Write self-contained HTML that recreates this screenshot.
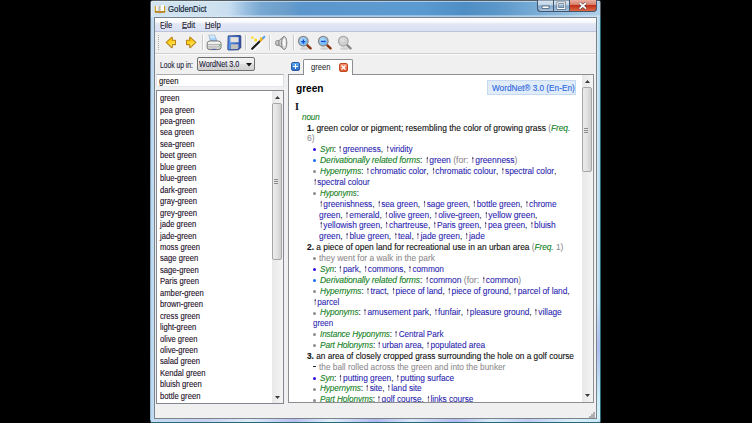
<!DOCTYPE html>
<html><head><meta charset="utf-8"><style>
*{margin:0;padding:0;box-sizing:border-box}
html,body{width:752px;height:423px;background:#000;overflow:hidden;font-family:"Liberation Sans",sans-serif;color:#000}
.a{position:absolute}
svg{display:block}
.t{position:absolute;white-space:nowrap;transform-origin:0 0}
.g{color:#0f8020;font-style:italic;-webkit-text-stroke:0.1px #0f8020;letter-spacing:-0.13px}
.k{color:#2a1eb0;-webkit-text-stroke:0.08px #2a1eb0;letter-spacing:-0.06px}
.ar{color:#5a5a7a}
.gr{color:#8e8a8e;-webkit-text-stroke:0.08px #8e8a8e}
.bl{color:#111;-webkit-text-stroke:0.12px #111}
u{text-decoration-thickness:0.7px;text-underline-offset:1px}
.dot{position:absolute;width:3px;height:3px;border-radius:1.5px}
</style></head><body>
<div class="a" style="left:150px;top:0px;width:451px;height:423px;border-radius:3px 3px 2px 2px;background:#555d64"></div>
<div class="a" style="left:150px;top:17px;width:451px;height:406px;border-radius:0 0 3px 3px;background:#2e6878"></div>
<div class="a" style="left:150px;top:17px;width:1px;height:403px;background:linear-gradient(180deg,#5a646c,#7a98b0 30%,#9ab8d0 100%)"></div>
<div class="a" style="left:151px;top:1px;width:449px;height:421px;border-radius:2px 2px 2px 2px;background:linear-gradient(90deg,#d2e3ef 0px,#cfe2ee 60px,#c8def0 78px,#98bee0 95px,#78a8d2 110px,#6c9ecc 135px,#5b96cc 150px,#5c9ad0 230px,#5a9ad0 270px,#4f8ec4 315px,#5a96c8 345px,#78acd6 385px,#98c0e0 420px,#b0d0ea 449px)"></div>
<div class="a" style="left:151px;top:1px;width:449px;height:1px;background:rgba(235,245,252,0.55)"></div>
<div class="a" style="left:151px;top:15px;width:449px;height:2px;background:linear-gradient(180deg,rgba(200,225,245,0.4),rgba(220,235,250,0.7))"></div>
<div class="a" style="left:151px;top:17px;width:449px;height:405px;border-radius:0 0 2px 2px;background:linear-gradient(180deg,#bcd6ec 0,#b4d0ea 60%,#b8d8f0 100%)"></div>
<div class="a" style="left:151px;top:2px;width:1px;height:420px;background:rgba(230,242,252,0.6)"></div>
<div class="a" style="left:597px;top:17px;width:3px;height:405px;background:linear-gradient(90deg,#d2eef8,#b0d4ee)"></div>
<div class="a" style="left:151px;top:17px;width:3px;height:405px;background:linear-gradient(90deg,#b8d6ee,#c4def2)"></div>
<div class="a" style="left:597px;top:300px;width:3px;height:120px;background:linear-gradient(180deg,rgba(170,180,240,0) 0,rgba(170,180,240,0.8) 40%,#c8ecf8 80%,#d8f4fc 100%)"></div>
<div class="a" style="left:151px;top:419px;width:449px;height:3px;border-radius:0 0 2px 2px;background:linear-gradient(90deg,#c4dcf2 0,#c8d0f0 12%,#dcecf8 22%,#b8c0f0 32%,#e0f0fa 40%,#b0b8f0 50%,#d8e8f8 58%,#b4bcf0 68%,#d8ecf8 76%,#c0ccf2 84%,#d8f0fa 94%,#c8e8f6 100%)"></div>
<svg class="a" style="left:154px;top:3px" width="12" height="11" viewBox="0 0 12 11"><path d="M0.8 3.6 Q0.8 3 1.5 3 L10.5 3 Q11.2 3 11.2 3.6 L11.2 8.8 Q11.2 9.6 10.4 9.6 L6.6 9.6 L6 10.4 L5.4 9.6 L1.6 9.6 Q0.8 9.6 0.8 8.8 Z" fill="#d69c14"/><path d="M0.8 8.2 L11.2 8.2 L11.2 8.8 Q11.2 9.6 10.4 9.6 L6.6 9.6 L6 10.4 L5.4 9.6 L1.6 9.6 Q0.8 9.6 0.8 8.8 Z" fill="#a87408"/><path d="M1.9 3 Q3.9 2.4 5.8 3.2 L5.8 8.3 Q3.9 7.7 1.9 8.1 Z" fill="#f2f2ee"/><path d="M6.2 3.2 Q8 2.2 9.9 1.6 L10.1 8.1 Q8.1 7.7 6.2 8.3 Z" fill="#ffffff"/><path d="M4.2 3 L5.8 3.2 L5.8 8.3 L4.2 7.8 Z" fill="#c8c8c4"/><path d="M6 3.2 L6 8.4" stroke="#8a8a84" stroke-width="0.5"/></svg>
<div class="t" style="left:168.20px;top:5.05px;font-size:8.80px;line-height:8.80px;transform:scaleX(0.885);color:#0c1a33;-webkit-text-stroke:0.15px #0c1a33">GoldenDict</div>
<svg class="a" style="left:537px;top:0px" width="60" height="12" viewBox="0 0 60 12"><defs><linearGradient id="gb" x1="0" y1="0" x2="0" y2="1"><stop offset="0" stop-color="#dce8f2"/><stop offset="0.45" stop-color="#bcd2e6"/><stop offset="0.5" stop-color="#7fa6cc"/><stop offset="1" stop-color="#a8c6e2"/></linearGradient><linearGradient id="gc" x1="0" y1="0" x2="0" y2="1"><stop offset="0" stop-color="#eab0a4"/><stop offset="0.45" stop-color="#d87a66"/><stop offset="0.5" stop-color="#c2301a"/><stop offset="1" stop-color="#dc6a48"/></linearGradient></defs><path d="M0.5 0 L0.5 8.5 Q0.5 11.5 3.5 11.5 L56.5 11.5 Q59.5 11.5 59.5 8.5 L59.5 0Z" fill="url(#gb)" stroke="#46566a" stroke-width="1"/><path d="M32.5 0 L32.5 11 L56.5 11 Q59 11 59 8.5 L59 0Z" fill="url(#gc)"/><path d="M16.5 0 L16.5 11.5 M32.5 0 L32.5 11.5" stroke="#46566a" stroke-width="1"/><path d="M0.5 0 L0.5 8.5 Q0.5 11.5 3.5 11.5 L56.5 11.5 Q59.5 11.5 59.5 8.5 L59.5 0" fill="none" stroke="#46566a" stroke-width="1"/><rect x="5" y="6" width="7" height="2.6" fill="#fff" stroke="#3a4a5e" stroke-width="0.7"/><rect x="20.8" y="2.8" width="7" height="5.6" fill="none" stroke="#3a4a5e" stroke-width="2.2"/><rect x="20.8" y="2.8" width="7" height="5.6" fill="none" stroke="#fff" stroke-width="1.2"/><path d="M42.6 3 L49 8.6 M49 3 L42.6 8.6" stroke="#4a3a3a" stroke-width="2.8"/><path d="M42.6 3 L49 8.6 M49 3 L42.6 8.6" stroke="#fff" stroke-width="1.7"/></svg>
<div class="a" style="left:154px;top:17px;width:443px;height:402px;background:#f0f0f0;border:1px solid #7a828c"></div>
<div class="a" style="left:155px;top:18px;width:441px;height:14px;background:linear-gradient(180deg,#ffffff 0,#f8f9fc 30%,#e2e7f5 42%,#d8dff2 100%)"></div>
<div class="a" style="left:155px;top:31px;width:441px;height:1px;background:#bcc4da"></div>
<div class="t" style="left:160.40px;top:20.82px;font-size:8.60px;line-height:8.60px;transform:scaleX(0.890);color:#1a1a2a;-webkit-text-stroke:0.1px #1a1a2a">File</div>
<div class="a" style="left:160.6px;top:28.2px;width:4px;height:1px;background:#3a3a4a;opacity:0.8"></div>
<div class="t" style="left:181.90px;top:20.82px;font-size:8.60px;line-height:8.60px;transform:scaleX(0.890);color:#1a1a2a;-webkit-text-stroke:0.1px #1a1a2a">Edit</div>
<div class="a" style="left:182.1px;top:28.2px;width:5px;height:1px;background:#3a3a4a;opacity:0.8"></div>
<div class="t" style="left:204.80px;top:20.82px;font-size:8.60px;line-height:8.60px;transform:scaleX(0.890);color:#1a1a2a;-webkit-text-stroke:0.1px #1a1a2a">Help</div>
<div class="a" style="left:205.0px;top:28.2px;width:5px;height:1px;background:#3a3a4a;opacity:0.8"></div>
<div class="a" style="left:155px;top:32px;width:441px;height:21px;background:#f0f0f0"></div>
<div class="a" style="left:155px;top:53px;width:441px;height:1px;background:#d0d0d0"></div>
<div class="a" style="left:155px;top:54px;width:441px;height:1px;background:#fbfbfb"></div>
<div class="a" style="left:158px;top:35px;width:1px;height:1px;background:#a8a8a8"></div>
<div class="a" style="left:158px;top:37px;width:1px;height:1px;background:#a8a8a8"></div>
<div class="a" style="left:158px;top:39px;width:1px;height:1px;background:#a8a8a8"></div>
<div class="a" style="left:158px;top:41px;width:1px;height:1px;background:#a8a8a8"></div>
<div class="a" style="left:158px;top:43px;width:1px;height:1px;background:#a8a8a8"></div>
<div class="a" style="left:158px;top:45px;width:1px;height:1px;background:#a8a8a8"></div>
<div class="a" style="left:158px;top:47px;width:1px;height:1px;background:#a8a8a8"></div>
<div class="a" style="left:158px;top:49px;width:1px;height:1px;background:#a8a8a8"></div>
<div class="a" style="left:202px;top:35px;width:1px;height:15px;background:#c8c8c8"></div>
<div class="a" style="left:203px;top:35px;width:1px;height:15px;background:#fff"></div>
<div class="a" style="left:245px;top:35px;width:1px;height:15px;background:#c8c8c8"></div>
<div class="a" style="left:246px;top:35px;width:1px;height:15px;background:#fff"></div>
<div class="a" style="left:269px;top:35px;width:1px;height:15px;background:#c8c8c8"></div>
<div class="a" style="left:270px;top:35px;width:1px;height:15px;background:#fff"></div>
<div class="a" style="left:293px;top:35px;width:1px;height:15px;background:#c8c8c8"></div>
<div class="a" style="left:294px;top:35px;width:1px;height:15px;background:#fff"></div>
<svg class="a" style="left:163px;top:35px" width="16" height="16" viewBox="0 0 16 16"><defs><linearGradient id="ga" x1="0" y1="0" x2="0.3" y2="1"><stop offset="0" stop-color="#f6b400"/><stop offset="0.55" stop-color="#ffd21a"/><stop offset="1" stop-color="#fff08a"/></linearGradient></defs><path d="M3.2 7.4 L8.6 2.3 Q9.3 1.9 9.3 2.8 L9.3 5.3 L12.5 5.3 L12.5 9.6 L9.3 9.6 L9.3 12.1 Q9.3 13 8.6 12.5 Z" fill="url(#ga)" stroke="#b8861a" stroke-width="1.05" stroke-linejoin="round"/></svg>
<svg class="a" style="left:183px;top:35px" width="16" height="16" viewBox="0 0 16 16"><path d="M12.8 7.4 L7.4 2.3 Q6.7 1.9 6.7 2.8 L6.7 5.3 L3.5 5.3 L3.5 9.6 L6.7 9.6 L6.7 12.1 Q6.7 13 7.4 12.5 Z" fill="url(#ga)" stroke="#b8861a" stroke-width="1.05" stroke-linejoin="round"/></svg>
<svg class="a" style="left:204px;top:33px" width="40" height="20" viewBox="0 0 40 20"><defs><linearGradient id="gp" x1="0" y1="0" x2="0" y2="1"><stop offset="0" stop-color="#f0f8ff"/><stop offset="1" stop-color="#8ec6f6"/></linearGradient><linearGradient id="gpb" x1="0" y1="0" x2="0" y2="1"><stop offset="0" stop-color="#fafafa"/><stop offset="0.5" stop-color="#e4e4e4"/><stop offset="1" stop-color="#c8c8c8"/></linearGradient><linearGradient id="gf" x1="0" y1="0" x2="1" y2="0"><stop offset="0" stop-color="#5a9af0"/><stop offset="1" stop-color="#2a50b0"/></linearGradient></defs><path d="M4.8 2.1 L10.6 2.1 L12.8 7.6 L6.4 7.6 Z" fill="url(#gp)" stroke="#7aa0c8" stroke-width="0.6"/><path d="M3.2 10.2 Q3.4 8.2 5.8 8 L14.2 8 Q16.8 8.2 17 10.2 L17 14.6 Q16.8 16.6 14.2 16.6 L5.8 16.6 Q3.4 16.6 3.2 14.6 Z" fill="url(#gpb)" stroke="#5a5a5a" stroke-width="0.8"/><path d="M3.6 11.6 L16.6 11.6" stroke="#8a8a8a" stroke-width="0.6"/><path d="M4.5 13.8 L15.6 13.8" stroke="#9a9a9a" stroke-width="0.6"/><path d="M8 16.4 L12 16.4" stroke="#4a5ab0" stroke-width="0.9"/><rect x="15" y="11.8" width="1.2" height="1" fill="#2ec82e"/><path d="M24.2 2.9 L36 2.6 Q36.8 2.6 36.8 3.4 L36.8 14.6 L34.6 16.8 L24.6 17 Q23.8 17 23.8 16.2 Z" fill="url(#gf)" stroke="#2a3a78" stroke-width="0.9"/><rect x="26.4" y="4.1" width="8.2" height="5.2" fill="#e6e2de"/><path d="M26.9 11.2 L34.4 11.2 L34.4 15.1 L33.4 16.1 L26.9 16.1 Z" fill="#c4c0bc"/></svg>
<svg class="a" style="left:248px;top:33px" width="20" height="20" viewBox="0 0 20 20"><path d="M5 16.2 L13.2 8.2" stroke="#fff" stroke-width="2.2" stroke-linecap="round" opacity="0.7" transform="translate(0.8,0.8)"/><path d="M4.2 15.8 L12.6 7.6" stroke="#1a1a1a" stroke-width="2.1" stroke-linecap="round"/><path d="M12.4 7.8 L15.2 5" stroke="#f0b020" stroke-width="2.1" stroke-linecap="round"/><path d="M15 5.2 L16.4 3.8" stroke="#5aa0f0" stroke-width="2" stroke-linecap="round"/><circle cx="4.4" cy="4.7" r="1.4" fill="#f8e040"/><circle cx="7.7" cy="7" r="1.5" fill="#f8d818"/><circle cx="13" cy="5" r="1.1" fill="#f8c830"/></svg>
<svg class="a" style="left:274px;top:35px" width="15" height="16" viewBox="0 0 15 16"><defs><linearGradient id="gs" x1="0" y1="0" x2="1" y2="1"><stop offset="0" stop-color="#e8e8e8"/><stop offset="1" stop-color="#a8a8a8"/></linearGradient></defs><rect x="1.8" y="5.6" width="4" height="4.8" rx="1.4" fill="url(#gs)" stroke="#7a7a7a" stroke-width="0.9"/><path d="M5 5.6 L9.6 1.6 L10.5 14.4 L5 10.4 Z" fill="url(#gs)" stroke="#7a7a7a" stroke-width="0.9" stroke-linejoin="round"/><ellipse cx="10.2" cy="8" rx="2.6" ry="6.5" fill="#dcdcdc" stroke="#7a7a7a" stroke-width="0.9"/><ellipse cx="10.1" cy="7.6" rx="1.3" ry="3.6" fill="#fafafa"/></svg>
<svg class="a" style="left:297.3px;top:35px" width="16" height="16" viewBox="0 0 16 16"><defs><radialGradient id="gmin" cx="0.45" cy="0.4" r="0.6"><stop offset="0" stop-color="#c8ecff"/><stop offset="1" stop-color="#3a96f4"/></radialGradient></defs><ellipse cx="7.5" cy="13.6" rx="4.5" ry="1.3" fill="#000" opacity="0.13"/><path d="M9.6 9.6 L13.6 13.4" stroke="#8a3410" stroke-width="2.4" stroke-linecap="round"/><circle cx="6.3" cy="6.2" r="4.7" fill="url(#gmin)" stroke="#8c8c8c" stroke-width="1.5"/><circle cx="6.3" cy="6.2" r="3.8" fill="none" stroke="#fff" stroke-width="0.5" opacity="0.6"/><path d="M4.3 6.6 L8.3 6.6 M6.3 4.6 L6.3 8.6" stroke="#0c48d0" stroke-width="1.4"/></svg>
<svg class="a" style="left:317.4px;top:35px" width="16" height="16" viewBox="0 0 16 16"><defs><radialGradient id="gmout" cx="0.45" cy="0.4" r="0.6"><stop offset="0" stop-color="#c8ecff"/><stop offset="1" stop-color="#3a96f4"/></radialGradient></defs><ellipse cx="7.5" cy="13.6" rx="4.5" ry="1.3" fill="#000" opacity="0.13"/><path d="M9.6 9.6 L13.6 13.4" stroke="#8a3410" stroke-width="2.4" stroke-linecap="round"/><circle cx="6.3" cy="6.2" r="4.7" fill="url(#gmout)" stroke="#8c8c8c" stroke-width="1.5"/><circle cx="6.3" cy="6.2" r="3.8" fill="none" stroke="#fff" stroke-width="0.5" opacity="0.6"/><path d="M4.1 6.4 L8.5 6.4" stroke="#0c48d0" stroke-width="1.4"/></svg>
<svg class="a" style="left:337.2px;top:35px" width="16" height="16" viewBox="0 0 16 16"><defs><radialGradient id="gmgray" cx="0.45" cy="0.4" r="0.6"><stop offset="0" stop-color="#e4e4e4"/><stop offset="1" stop-color="#bcbcbc"/></radialGradient></defs><ellipse cx="7.5" cy="13.6" rx="4.5" ry="1.3" fill="#000" opacity="0.13"/><path d="M9.6 9.6 L13.6 13.4" stroke="#8a8a8a" stroke-width="2.4" stroke-linecap="round"/><circle cx="6.3" cy="6.2" r="4.7" fill="url(#gmgray)" stroke="#a8a8a8" stroke-width="1.5"/><circle cx="6.3" cy="6.2" r="3.8" fill="none" stroke="#fff" stroke-width="0.5" opacity="0.6"/></svg>
<div class="t" style="left:160.00px;top:60.52px;font-size:8.60px;line-height:8.60px;transform:scaleX(0.780);color:#1a1a3a;-webkit-text-stroke:0.1px #1a1a3a">Look up in:</div>
<div class="a" style="left:197px;top:57px;width:58px;height:14px;border:1px solid #707070;border-radius:2px;background:linear-gradient(180deg,#f2f2f2 0,#ebebeb 50%,#dddddd 51%,#cfcfcf 100%)"></div>
<div class="t" style="left:199.40px;top:60.32px;font-size:8.60px;line-height:8.60px;transform:scaleX(0.835);color:#1a1a3a;-webkit-text-stroke:0.1px #1a1a3a">WordNet 3.0</div>
<svg class="a" style="left:246px;top:63px" width="6" height="4" viewBox="0 0 6 4"><path d="M0 0 L6 0 L3 3.5Z" fill="#111"/></svg>
<div class="a" style="left:156px;top:74px;width:128px;height:13px;background:#fff;border:1px solid #abadb3;border-bottom-color:#e3e9ef;border-left-color:#e2e3ea;border-right-color:#dbdfe6"></div>
<div class="t" style="left:158.90px;top:76.52px;font-size:8.60px;line-height:8.60px;transform:scaleX(0.890);color:#111;-webkit-text-stroke:0.1px #111">green</div>
<div class="a" style="left:156px;top:90px;width:128px;height:314px;background:#fff;border:1px solid #828790"></div>
<div class="t" style="left:159.90px;top:94.12px;font-size:8.60px;line-height:8.60px;transform:scaleX(0.890);color:#1e1028;-webkit-text-stroke:0.12px #1e1028">green</div>
<div class="t" style="left:159.90px;top:105.57px;font-size:8.60px;line-height:8.60px;transform:scaleX(0.890);color:#1e1028;-webkit-text-stroke:0.12px #1e1028">pea green</div>
<div class="t" style="left:159.90px;top:117.02px;font-size:8.60px;line-height:8.60px;transform:scaleX(0.890);color:#1e1028;-webkit-text-stroke:0.12px #1e1028">pea-green</div>
<div class="t" style="left:159.90px;top:128.47px;font-size:8.60px;line-height:8.60px;transform:scaleX(0.890);color:#1e1028;-webkit-text-stroke:0.12px #1e1028">sea green</div>
<div class="t" style="left:159.90px;top:139.92px;font-size:8.60px;line-height:8.60px;transform:scaleX(0.890);color:#1e1028;-webkit-text-stroke:0.12px #1e1028">sea-green</div>
<div class="t" style="left:159.90px;top:151.37px;font-size:8.60px;line-height:8.60px;transform:scaleX(0.890);color:#1e1028;-webkit-text-stroke:0.12px #1e1028">beet green</div>
<div class="t" style="left:159.90px;top:162.82px;font-size:8.60px;line-height:8.60px;transform:scaleX(0.890);color:#1e1028;-webkit-text-stroke:0.12px #1e1028">blue green</div>
<div class="t" style="left:159.90px;top:174.27px;font-size:8.60px;line-height:8.60px;transform:scaleX(0.890);color:#1e1028;-webkit-text-stroke:0.12px #1e1028">blue-green</div>
<div class="t" style="left:159.90px;top:185.72px;font-size:8.60px;line-height:8.60px;transform:scaleX(0.890);color:#1e1028;-webkit-text-stroke:0.12px #1e1028">dark-green</div>
<div class="t" style="left:159.90px;top:197.17px;font-size:8.60px;line-height:8.60px;transform:scaleX(0.890);color:#1e1028;-webkit-text-stroke:0.12px #1e1028">gray-green</div>
<div class="t" style="left:159.90px;top:208.62px;font-size:8.60px;line-height:8.60px;transform:scaleX(0.890);color:#1e1028;-webkit-text-stroke:0.12px #1e1028">grey-green</div>
<div class="t" style="left:159.90px;top:220.07px;font-size:8.60px;line-height:8.60px;transform:scaleX(0.890);color:#1e1028;-webkit-text-stroke:0.12px #1e1028">jade green</div>
<div class="t" style="left:159.90px;top:231.52px;font-size:8.60px;line-height:8.60px;transform:scaleX(0.890);color:#1e1028;-webkit-text-stroke:0.12px #1e1028">jade-green</div>
<div class="t" style="left:159.90px;top:242.97px;font-size:8.60px;line-height:8.60px;transform:scaleX(0.890);color:#1e1028;-webkit-text-stroke:0.12px #1e1028">moss green</div>
<div class="t" style="left:159.90px;top:254.42px;font-size:8.60px;line-height:8.60px;transform:scaleX(0.890);color:#1e1028;-webkit-text-stroke:0.12px #1e1028">sage green</div>
<div class="t" style="left:159.90px;top:265.87px;font-size:8.60px;line-height:8.60px;transform:scaleX(0.890);color:#1e1028;-webkit-text-stroke:0.12px #1e1028">sage-green</div>
<div class="t" style="left:159.90px;top:277.32px;font-size:8.60px;line-height:8.60px;transform:scaleX(0.890);color:#1e1028;-webkit-text-stroke:0.12px #1e1028">Paris green</div>
<div class="t" style="left:159.90px;top:288.77px;font-size:8.60px;line-height:8.60px;transform:scaleX(0.890);color:#1e1028;-webkit-text-stroke:0.12px #1e1028">amber-green</div>
<div class="t" style="left:159.90px;top:300.22px;font-size:8.60px;line-height:8.60px;transform:scaleX(0.890);color:#1e1028;-webkit-text-stroke:0.12px #1e1028">brown-green</div>
<div class="t" style="left:159.90px;top:311.67px;font-size:8.60px;line-height:8.60px;transform:scaleX(0.890);color:#1e1028;-webkit-text-stroke:0.12px #1e1028">cress green</div>
<div class="t" style="left:159.90px;top:323.12px;font-size:8.60px;line-height:8.60px;transform:scaleX(0.890);color:#1e1028;-webkit-text-stroke:0.12px #1e1028">light-green</div>
<div class="t" style="left:159.90px;top:334.57px;font-size:8.60px;line-height:8.60px;transform:scaleX(0.890);color:#1e1028;-webkit-text-stroke:0.12px #1e1028">olive green</div>
<div class="t" style="left:159.90px;top:346.02px;font-size:8.60px;line-height:8.60px;transform:scaleX(0.890);color:#1e1028;-webkit-text-stroke:0.12px #1e1028">olive-green</div>
<div class="t" style="left:159.90px;top:357.47px;font-size:8.60px;line-height:8.60px;transform:scaleX(0.890);color:#1e1028;-webkit-text-stroke:0.12px #1e1028">salad green</div>
<div class="t" style="left:159.90px;top:368.92px;font-size:8.60px;line-height:8.60px;transform:scaleX(0.890);color:#1e1028;-webkit-text-stroke:0.12px #1e1028">Kendal green</div>
<div class="t" style="left:159.90px;top:380.37px;font-size:8.60px;line-height:8.60px;transform:scaleX(0.890);color:#1e1028;-webkit-text-stroke:0.12px #1e1028">bluish green</div>
<div class="t" style="left:159.90px;top:391.82px;font-size:8.60px;line-height:8.60px;transform:scaleX(0.890);color:#1e1028;-webkit-text-stroke:0.12px #1e1028">bottle green</div>
<div class="a" style="left:272px;top:91px;width:11px;height:312px;background:linear-gradient(90deg,#e8e8e8,#f4f4f4)"></div><svg class="a" style="left:275px;top:96px" width="5" height="3" viewBox="0 0 5 3"><path d="M0 3 L5 3 L2.5 0Z" fill="#3a3a3a"/></svg><svg class="a" style="left:275px;top:396px" width="5" height="3" viewBox="0 0 5 3"><path d="M0 0 L5 0 L2.5 3Z" fill="#3a3a3a"/></svg><div class="a" style="left:272px;top:103px;width:10px;height:157px;border:1px solid #a5a5a5;border-radius:2px;background:linear-gradient(90deg,#ececec 0,#e2e2e2 50%,#cfcfcf 100%)"></div><div class="a" style="left:274px;top:179px;width:4px;height:1px;background:#8c8c8c"></div><div class="a" style="left:274px;top:181px;width:4px;height:1px;background:#8c8c8c"></div><div class="a" style="left:274px;top:183px;width:4px;height:1px;background:#8c8c8c"></div>
<div class="a" style="left:291px;top:62px;width:9px;height:9px;border-radius:2px;background:linear-gradient(180deg,#62acf0,#2a6cc4);border:0.5px solid #2a5aa8"></div>
<div class="a" style="left:293px;top:66px;width:5px;height:1.4px;background:#fff"></div>
<div class="a" style="left:294.8px;top:64px;width:1.4px;height:5px;background:#fff"></div>
<div class="a" style="left:303px;top:59px;width:50px;height:16px;background:#fff;border:1px solid #8c8e94;border-bottom:none;border-radius:2px 2px 0 0"></div>
<div class="t" style="left:310.70px;top:63.12px;font-size:8.60px;line-height:8.60px;transform:scaleX(0.890);color:#1a1a1a;">green</div>
<div class="a" style="left:339px;top:63px;width:9px;height:9px;border-radius:2px;background:linear-gradient(180deg,#f89070,#e05a30);border:0.5px solid #c04a20"></div>
<svg class="a" style="left:341px;top:65px" width="5" height="5" viewBox="0 0 5 5"><path d="M0.5 0.5 L4.5 4.5 M4.5 0.5 L0.5 4.5" stroke="#fff" stroke-width="1.3"/></svg>
<div class="a" style="left:288px;top:74px;width:306px;height:329px;background:#fff;border:1px solid #8c8e94"></div>
<div class="a" style="left:304px;top:74px;width:48px;height:1px;background:#fff"></div>
<div class="a" style="left:582px;top:75px;width:11px;height:327px;background:linear-gradient(90deg,#e8e8e8,#f4f4f4)"></div><svg class="a" style="left:585px;top:80px" width="5" height="3" viewBox="0 0 5 3"><path d="M0 3 L5 3 L2.5 0Z" fill="#3a3a3a"/></svg><svg class="a" style="left:585px;top:394px" width="5" height="3" viewBox="0 0 5 3"><path d="M0 0 L5 0 L2.5 3Z" fill="#3a3a3a"/></svg><div class="a" style="left:582px;top:87px;width:10px;height:85px;border:1px solid #a5a5a5;border-radius:2px;background:linear-gradient(90deg,#ececec 0,#e2e2e2 50%,#cfcfcf 100%)"></div><div class="a" style="left:584px;top:128px;width:4px;height:1px;background:#8c8c8c"></div><div class="a" style="left:584px;top:130px;width:4px;height:1px;background:#8c8c8c"></div><div class="a" style="left:584px;top:132px;width:4px;height:1px;background:#8c8c8c"></div>
<div class="t" style="left:295.70px;top:83.41px;font-size:10.50px;line-height:10.50px;transform:scaleX(0.960);color:#000;font-weight:bold">green</div>
<div class="a" style="left:487px;top:80px;width:89px;height:15px;background:#e1ecf9;border:1px solid #c5d9f1"></div>
<div class="t" style="left:491.70px;top:84.15px;font-size:8.80px;line-height:8.80px;transform:scaleX(0.935);color:#2a66e0;-webkit-text-stroke:0.12px #2a66e0">WordNet&reg; 3.0 (En-En)</div>
<div class="t" style="left:294.70px;top:101.87px;font-size:9.60px;line-height:9.60px;transform:scaleX(1.050);color:#111;font-family:'Liberation Serif',serif;font-weight:bold">I</div>
<div class="a" style="left:289px;top:75px;width:293px;height:327px;overflow:hidden">
<div class="t" style="left:12.80px;top:37.74px;font-size:9.20px;line-height:9.20px;transform:scaleX(0.886);color:#111;"><span class="g">noun</span></div>
<div class="t" style="left:18.20px;top:48.61px;font-size:9.20px;line-height:9.20px;transform:scaleX(0.919);color:#111;"><b class="bl">1.</b> <span class="bl">green color or pigment; resembling the color of growing grass</span> <span class="gr">(</span><span class="g">Freq.</span></div>
<div class="t" style="left:18.20px;top:59.48px;font-size:9.20px;line-height:9.20px;transform:scaleX(0.920);color:#111;"><span class="gr">6)</span></div>
<div class="t" style="left:30.70px;top:70.35px;font-size:9.20px;line-height:9.20px;transform:scaleX(0.897);color:#111;"><span class="g">Syn</span>: <svg style="display:inline-block;vertical-align:baseline;margin:0 1px 0 0.8px" width="3" height="7" viewBox="0 0 3 7"><path d="M1.5 7 L1.5 2" stroke="#7a6a8a" stroke-width="0.8"/><path d="M0.5 2.8 L1.5 0.4 L2.5 2.8Z" fill="#3a3050"/></svg><span class="k">greenness</span>, <svg style="display:inline-block;vertical-align:baseline;margin:0 1px 0 0.8px" width="3" height="7" viewBox="0 0 3 7"><path d="M1.5 7 L1.5 2" stroke="#7a6a8a" stroke-width="0.8"/><path d="M0.5 2.8 L1.5 0.4 L2.5 2.8Z" fill="#3a3050"/></svg><span class="k">viridity</span></div>
<div class="t" style="left:30.70px;top:81.22px;font-size:9.20px;line-height:9.20px;transform:scaleX(0.929);color:#111;"><span class="g">Derivationally related forms</span>: <svg style="display:inline-block;vertical-align:baseline;margin:0 1px 0 0.8px" width="3" height="7" viewBox="0 0 3 7"><path d="M1.5 7 L1.5 2" stroke="#7a6a8a" stroke-width="0.8"/><path d="M0.5 2.8 L1.5 0.4 L2.5 2.8Z" fill="#3a3050"/></svg><span class="k">green</span> <span class="gr">(for: </span><svg style="display:inline-block;vertical-align:baseline;margin:0 1px 0 0.8px" width="3" height="7" viewBox="0 0 3 7"><path d="M1.5 7 L1.5 2" stroke="#7a6a8a" stroke-width="0.8"/><path d="M0.5 2.8 L1.5 0.4 L2.5 2.8Z" fill="#3a3050"/></svg><span class="k">greenness</span><span class="gr">)</span></div>
<div class="t" style="left:30.70px;top:92.09px;font-size:9.20px;line-height:9.20px;transform:scaleX(0.912);color:#111;"><span class="g">Hypernyms</span>: <svg style="display:inline-block;vertical-align:baseline;margin:0 1px 0 0.8px" width="3" height="7" viewBox="0 0 3 7"><path d="M1.5 7 L1.5 2" stroke="#7a6a8a" stroke-width="0.8"/><path d="M0.5 2.8 L1.5 0.4 L2.5 2.8Z" fill="#3a3050"/></svg><span class="k">chromatic color</span>, <svg style="display:inline-block;vertical-align:baseline;margin:0 1px 0 0.8px" width="3" height="7" viewBox="0 0 3 7"><path d="M1.5 7 L1.5 2" stroke="#7a6a8a" stroke-width="0.8"/><path d="M0.5 2.8 L1.5 0.4 L2.5 2.8Z" fill="#3a3050"/></svg><span class="k">chromatic colour</span>, <svg style="display:inline-block;vertical-align:baseline;margin:0 1px 0 0.8px" width="3" height="7" viewBox="0 0 3 7"><path d="M1.5 7 L1.5 2" stroke="#7a6a8a" stroke-width="0.8"/><path d="M0.5 2.8 L1.5 0.4 L2.5 2.8Z" fill="#3a3050"/></svg><span class="k">spectral color</span>,</div>
<div class="t" style="left:24.30px;top:102.96px;font-size:9.20px;line-height:9.20px;transform:scaleX(0.892);color:#111;"><svg style="display:inline-block;vertical-align:baseline;margin:0 1px 0 0.8px" width="3" height="7" viewBox="0 0 3 7"><path d="M1.5 7 L1.5 2" stroke="#7a6a8a" stroke-width="0.8"/><path d="M0.5 2.8 L1.5 0.4 L2.5 2.8Z" fill="#3a3050"/></svg><span class="k">spectral colour</span></div>
<div class="t" style="left:30.70px;top:113.83px;font-size:9.20px;line-height:9.20px;transform:scaleX(0.865);color:#111;"><span class="g">Hyponyms</span>:</div>
<div class="t" style="left:29.90px;top:124.70px;font-size:9.20px;line-height:9.20px;transform:scaleX(0.906);color:#111;"><svg style="display:inline-block;vertical-align:baseline;margin:0 1px 0 0.8px" width="3" height="7" viewBox="0 0 3 7"><path d="M1.5 7 L1.5 2" stroke="#7a6a8a" stroke-width="0.8"/><path d="M0.5 2.8 L1.5 0.4 L2.5 2.8Z" fill="#3a3050"/></svg><span class="k">greenishness</span>, <svg style="display:inline-block;vertical-align:baseline;margin:0 1px 0 0.8px" width="3" height="7" viewBox="0 0 3 7"><path d="M1.5 7 L1.5 2" stroke="#7a6a8a" stroke-width="0.8"/><path d="M0.5 2.8 L1.5 0.4 L2.5 2.8Z" fill="#3a3050"/></svg><span class="k">sea green</span>, <svg style="display:inline-block;vertical-align:baseline;margin:0 1px 0 0.8px" width="3" height="7" viewBox="0 0 3 7"><path d="M1.5 7 L1.5 2" stroke="#7a6a8a" stroke-width="0.8"/><path d="M0.5 2.8 L1.5 0.4 L2.5 2.8Z" fill="#3a3050"/></svg><span class="k">sage green</span>, <svg style="display:inline-block;vertical-align:baseline;margin:0 1px 0 0.8px" width="3" height="7" viewBox="0 0 3 7"><path d="M1.5 7 L1.5 2" stroke="#7a6a8a" stroke-width="0.8"/><path d="M0.5 2.8 L1.5 0.4 L2.5 2.8Z" fill="#3a3050"/></svg><span class="k">bottle green</span>, <svg style="display:inline-block;vertical-align:baseline;margin:0 1px 0 0.8px" width="3" height="7" viewBox="0 0 3 7"><path d="M1.5 7 L1.5 2" stroke="#7a6a8a" stroke-width="0.8"/><path d="M0.5 2.8 L1.5 0.4 L2.5 2.8Z" fill="#3a3050"/></svg><span class="k">chrome</span></div>
<div class="t" style="left:29.90px;top:135.57px;font-size:9.20px;line-height:9.20px;transform:scaleX(0.917);color:#111;"><span class="k">green</span>, <svg style="display:inline-block;vertical-align:baseline;margin:0 1px 0 0.8px" width="3" height="7" viewBox="0 0 3 7"><path d="M1.5 7 L1.5 2" stroke="#7a6a8a" stroke-width="0.8"/><path d="M0.5 2.8 L1.5 0.4 L2.5 2.8Z" fill="#3a3050"/></svg><span class="k">emerald</span>, <svg style="display:inline-block;vertical-align:baseline;margin:0 1px 0 0.8px" width="3" height="7" viewBox="0 0 3 7"><path d="M1.5 7 L1.5 2" stroke="#7a6a8a" stroke-width="0.8"/><path d="M0.5 2.8 L1.5 0.4 L2.5 2.8Z" fill="#3a3050"/></svg><span class="k">olive green</span>, <svg style="display:inline-block;vertical-align:baseline;margin:0 1px 0 0.8px" width="3" height="7" viewBox="0 0 3 7"><path d="M1.5 7 L1.5 2" stroke="#7a6a8a" stroke-width="0.8"/><path d="M0.5 2.8 L1.5 0.4 L2.5 2.8Z" fill="#3a3050"/></svg><span class="k">olive-green</span>, <svg style="display:inline-block;vertical-align:baseline;margin:0 1px 0 0.8px" width="3" height="7" viewBox="0 0 3 7"><path d="M1.5 7 L1.5 2" stroke="#7a6a8a" stroke-width="0.8"/><path d="M0.5 2.8 L1.5 0.4 L2.5 2.8Z" fill="#3a3050"/></svg><span class="k">yellow green</span>,</div>
<div class="t" style="left:29.90px;top:146.44px;font-size:9.20px;line-height:9.20px;transform:scaleX(0.908);color:#111;"><svg style="display:inline-block;vertical-align:baseline;margin:0 1px 0 0.8px" width="3" height="7" viewBox="0 0 3 7"><path d="M1.5 7 L1.5 2" stroke="#7a6a8a" stroke-width="0.8"/><path d="M0.5 2.8 L1.5 0.4 L2.5 2.8Z" fill="#3a3050"/></svg><span class="k">yellowish green</span>, <svg style="display:inline-block;vertical-align:baseline;margin:0 1px 0 0.8px" width="3" height="7" viewBox="0 0 3 7"><path d="M1.5 7 L1.5 2" stroke="#7a6a8a" stroke-width="0.8"/><path d="M0.5 2.8 L1.5 0.4 L2.5 2.8Z" fill="#3a3050"/></svg><span class="k">chartreuse</span>, <svg style="display:inline-block;vertical-align:baseline;margin:0 1px 0 0.8px" width="3" height="7" viewBox="0 0 3 7"><path d="M1.5 7 L1.5 2" stroke="#7a6a8a" stroke-width="0.8"/><path d="M0.5 2.8 L1.5 0.4 L2.5 2.8Z" fill="#3a3050"/></svg><span class="k">Paris green</span>, <svg style="display:inline-block;vertical-align:baseline;margin:0 1px 0 0.8px" width="3" height="7" viewBox="0 0 3 7"><path d="M1.5 7 L1.5 2" stroke="#7a6a8a" stroke-width="0.8"/><path d="M0.5 2.8 L1.5 0.4 L2.5 2.8Z" fill="#3a3050"/></svg><span class="k">pea green</span>, <svg style="display:inline-block;vertical-align:baseline;margin:0 1px 0 0.8px" width="3" height="7" viewBox="0 0 3 7"><path d="M1.5 7 L1.5 2" stroke="#7a6a8a" stroke-width="0.8"/><path d="M0.5 2.8 L1.5 0.4 L2.5 2.8Z" fill="#3a3050"/></svg><span class="k">bluish</span></div>
<div class="t" style="left:29.90px;top:157.31px;font-size:9.20px;line-height:9.20px;transform:scaleX(0.920);color:#111;"><span class="k">green</span>, <svg style="display:inline-block;vertical-align:baseline;margin:0 1px 0 0.8px" width="3" height="7" viewBox="0 0 3 7"><path d="M1.5 7 L1.5 2" stroke="#7a6a8a" stroke-width="0.8"/><path d="M0.5 2.8 L1.5 0.4 L2.5 2.8Z" fill="#3a3050"/></svg><span class="k">blue green</span>, <svg style="display:inline-block;vertical-align:baseline;margin:0 1px 0 0.8px" width="3" height="7" viewBox="0 0 3 7"><path d="M1.5 7 L1.5 2" stroke="#7a6a8a" stroke-width="0.8"/><path d="M0.5 2.8 L1.5 0.4 L2.5 2.8Z" fill="#3a3050"/></svg><span class="k">teal</span>, <svg style="display:inline-block;vertical-align:baseline;margin:0 1px 0 0.8px" width="3" height="7" viewBox="0 0 3 7"><path d="M1.5 7 L1.5 2" stroke="#7a6a8a" stroke-width="0.8"/><path d="M0.5 2.8 L1.5 0.4 L2.5 2.8Z" fill="#3a3050"/></svg><span class="k">jade green</span>, <svg style="display:inline-block;vertical-align:baseline;margin:0 1px 0 0.8px" width="3" height="7" viewBox="0 0 3 7"><path d="M1.5 7 L1.5 2" stroke="#7a6a8a" stroke-width="0.8"/><path d="M0.5 2.8 L1.5 0.4 L2.5 2.8Z" fill="#3a3050"/></svg><span class="k">jade</span></div>
<div class="t" style="left:18.20px;top:168.18px;font-size:9.20px;line-height:9.20px;transform:scaleX(0.913);color:#111;"><b class="bl">2.</b> <span class="bl">a piece of open land for recreational use in an urban area</span> <span class="gr">(</span><span class="g">Freq.</span> <span class="gr">1)</span></div>
<div class="t" style="left:29.60px;top:179.05px;font-size:9.20px;line-height:9.20px;transform:scaleX(0.915);color:#111;"><span class="gr">they went for a walk in the park</span></div>
<div class="t" style="left:30.70px;top:189.92px;font-size:9.20px;line-height:9.20px;transform:scaleX(0.904);color:#111;"><span class="g">Syn</span>: <svg style="display:inline-block;vertical-align:baseline;margin:0 1px 0 0.8px" width="3" height="7" viewBox="0 0 3 7"><path d="M1.5 7 L1.5 2" stroke="#7a6a8a" stroke-width="0.8"/><path d="M0.5 2.8 L1.5 0.4 L2.5 2.8Z" fill="#3a3050"/></svg><span class="k">park</span>, <svg style="display:inline-block;vertical-align:baseline;margin:0 1px 0 0.8px" width="3" height="7" viewBox="0 0 3 7"><path d="M1.5 7 L1.5 2" stroke="#7a6a8a" stroke-width="0.8"/><path d="M0.5 2.8 L1.5 0.4 L2.5 2.8Z" fill="#3a3050"/></svg><span class="k">commons</span>, <svg style="display:inline-block;vertical-align:baseline;margin:0 1px 0 0.8px" width="3" height="7" viewBox="0 0 3 7"><path d="M1.5 7 L1.5 2" stroke="#7a6a8a" stroke-width="0.8"/><path d="M0.5 2.8 L1.5 0.4 L2.5 2.8Z" fill="#3a3050"/></svg><span class="k">common</span></div>
<div class="t" style="left:30.70px;top:200.79px;font-size:9.20px;line-height:9.20px;transform:scaleX(0.928);color:#111;"><span class="g">Derivationally related forms</span>: <svg style="display:inline-block;vertical-align:baseline;margin:0 1px 0 0.8px" width="3" height="7" viewBox="0 0 3 7"><path d="M1.5 7 L1.5 2" stroke="#7a6a8a" stroke-width="0.8"/><path d="M0.5 2.8 L1.5 0.4 L2.5 2.8Z" fill="#3a3050"/></svg><span class="k">common</span> <span class="gr">(for: </span><svg style="display:inline-block;vertical-align:baseline;margin:0 1px 0 0.8px" width="3" height="7" viewBox="0 0 3 7"><path d="M1.5 7 L1.5 2" stroke="#7a6a8a" stroke-width="0.8"/><path d="M0.5 2.8 L1.5 0.4 L2.5 2.8Z" fill="#3a3050"/></svg><span class="k">common</span><span class="gr">)</span></div>
<div class="t" style="left:30.70px;top:211.66px;font-size:9.20px;line-height:9.20px;transform:scaleX(0.914);color:#111;"><span class="g">Hypernyms</span>: <svg style="display:inline-block;vertical-align:baseline;margin:0 1px 0 0.8px" width="3" height="7" viewBox="0 0 3 7"><path d="M1.5 7 L1.5 2" stroke="#7a6a8a" stroke-width="0.8"/><path d="M0.5 2.8 L1.5 0.4 L2.5 2.8Z" fill="#3a3050"/></svg><span class="k">tract</span>, <svg style="display:inline-block;vertical-align:baseline;margin:0 1px 0 0.8px" width="3" height="7" viewBox="0 0 3 7"><path d="M1.5 7 L1.5 2" stroke="#7a6a8a" stroke-width="0.8"/><path d="M0.5 2.8 L1.5 0.4 L2.5 2.8Z" fill="#3a3050"/></svg><span class="k">piece of land</span>, <svg style="display:inline-block;vertical-align:baseline;margin:0 1px 0 0.8px" width="3" height="7" viewBox="0 0 3 7"><path d="M1.5 7 L1.5 2" stroke="#7a6a8a" stroke-width="0.8"/><path d="M0.5 2.8 L1.5 0.4 L2.5 2.8Z" fill="#3a3050"/></svg><span class="k">piece of ground</span>, <svg style="display:inline-block;vertical-align:baseline;margin:0 1px 0 0.8px" width="3" height="7" viewBox="0 0 3 7"><path d="M1.5 7 L1.5 2" stroke="#7a6a8a" stroke-width="0.8"/><path d="M0.5 2.8 L1.5 0.4 L2.5 2.8Z" fill="#3a3050"/></svg><span class="k">parcel of land</span>,</div>
<div class="t" style="left:24.30px;top:222.53px;font-size:9.20px;line-height:9.20px;transform:scaleX(0.893);color:#111;"><svg style="display:inline-block;vertical-align:baseline;margin:0 1px 0 0.8px" width="3" height="7" viewBox="0 0 3 7"><path d="M1.5 7 L1.5 2" stroke="#7a6a8a" stroke-width="0.8"/><path d="M0.5 2.8 L1.5 0.4 L2.5 2.8Z" fill="#3a3050"/></svg><span class="k">parcel</span></div>
<div class="t" style="left:30.70px;top:233.40px;font-size:9.20px;line-height:9.20px;transform:scaleX(0.909);color:#111;"><span class="g">Hyponyms</span>: <svg style="display:inline-block;vertical-align:baseline;margin:0 1px 0 0.8px" width="3" height="7" viewBox="0 0 3 7"><path d="M1.5 7 L1.5 2" stroke="#7a6a8a" stroke-width="0.8"/><path d="M0.5 2.8 L1.5 0.4 L2.5 2.8Z" fill="#3a3050"/></svg><span class="k">amusement park</span>, <svg style="display:inline-block;vertical-align:baseline;margin:0 1px 0 0.8px" width="3" height="7" viewBox="0 0 3 7"><path d="M1.5 7 L1.5 2" stroke="#7a6a8a" stroke-width="0.8"/><path d="M0.5 2.8 L1.5 0.4 L2.5 2.8Z" fill="#3a3050"/></svg><span class="k">funfair</span>, <svg style="display:inline-block;vertical-align:baseline;margin:0 1px 0 0.8px" width="3" height="7" viewBox="0 0 3 7"><path d="M1.5 7 L1.5 2" stroke="#7a6a8a" stroke-width="0.8"/><path d="M0.5 2.8 L1.5 0.4 L2.5 2.8Z" fill="#3a3050"/></svg><span class="k">pleasure ground</span>, <svg style="display:inline-block;vertical-align:baseline;margin:0 1px 0 0.8px" width="3" height="7" viewBox="0 0 3 7"><path d="M1.5 7 L1.5 2" stroke="#7a6a8a" stroke-width="0.8"/><path d="M0.5 2.8 L1.5 0.4 L2.5 2.8Z" fill="#3a3050"/></svg><span class="k">village</span></div>
<div class="t" style="left:24.30px;top:244.27px;font-size:9.20px;line-height:9.20px;transform:scaleX(0.868);color:#111;"><span class="k">green</span></div>
<div class="t" style="left:30.70px;top:255.14px;font-size:9.20px;line-height:9.20px;transform:scaleX(0.890);color:#111;"><span class="g">Instance Hyponyms</span>: <svg style="display:inline-block;vertical-align:baseline;margin:0 1px 0 0.8px" width="3" height="7" viewBox="0 0 3 7"><path d="M1.5 7 L1.5 2" stroke="#7a6a8a" stroke-width="0.8"/><path d="M0.5 2.8 L1.5 0.4 L2.5 2.8Z" fill="#3a3050"/></svg><span class="k">Central Park</span></div>
<div class="t" style="left:30.70px;top:266.01px;font-size:9.20px;line-height:9.20px;transform:scaleX(0.904);color:#111;"><span class="g">Part Holonyms</span>: <svg style="display:inline-block;vertical-align:baseline;margin:0 1px 0 0.8px" width="3" height="7" viewBox="0 0 3 7"><path d="M1.5 7 L1.5 2" stroke="#7a6a8a" stroke-width="0.8"/><path d="M0.5 2.8 L1.5 0.4 L2.5 2.8Z" fill="#3a3050"/></svg><span class="k">urban area</span>, <svg style="display:inline-block;vertical-align:baseline;margin:0 1px 0 0.8px" width="3" height="7" viewBox="0 0 3 7"><path d="M1.5 7 L1.5 2" stroke="#7a6a8a" stroke-width="0.8"/><path d="M0.5 2.8 L1.5 0.4 L2.5 2.8Z" fill="#3a3050"/></svg><span class="k">populated area</span></div>
<div class="t" style="left:18.20px;top:276.88px;font-size:9.20px;line-height:9.20px;transform:scaleX(0.898);color:#111;"><b class="bl">3.</b> <span class="bl">an area of closely cropped grass surrounding the hole on a golf course</span></div>
<div class="t" style="left:29.60px;top:287.75px;font-size:9.20px;line-height:9.20px;transform:scaleX(0.901);color:#111;"><span class="gr">the ball rolled across the green and into the bunker</span></div>
<div class="t" style="left:30.70px;top:298.62px;font-size:9.20px;line-height:9.20px;transform:scaleX(0.910);color:#111;"><span class="g">Syn</span>: <svg style="display:inline-block;vertical-align:baseline;margin:0 1px 0 0.8px" width="3" height="7" viewBox="0 0 3 7"><path d="M1.5 7 L1.5 2" stroke="#7a6a8a" stroke-width="0.8"/><path d="M0.5 2.8 L1.5 0.4 L2.5 2.8Z" fill="#3a3050"/></svg><span class="k">putting green</span>, <svg style="display:inline-block;vertical-align:baseline;margin:0 1px 0 0.8px" width="3" height="7" viewBox="0 0 3 7"><path d="M1.5 7 L1.5 2" stroke="#7a6a8a" stroke-width="0.8"/><path d="M0.5 2.8 L1.5 0.4 L2.5 2.8Z" fill="#3a3050"/></svg><span class="k">putting surface</span></div>
<div class="t" style="left:30.70px;top:309.49px;font-size:9.20px;line-height:9.20px;transform:scaleX(0.900);color:#111;"><span class="g">Hypernyms</span>: <svg style="display:inline-block;vertical-align:baseline;margin:0 1px 0 0.8px" width="3" height="7" viewBox="0 0 3 7"><path d="M1.5 7 L1.5 2" stroke="#7a6a8a" stroke-width="0.8"/><path d="M0.5 2.8 L1.5 0.4 L2.5 2.8Z" fill="#3a3050"/></svg><span class="k">site</span>, <svg style="display:inline-block;vertical-align:baseline;margin:0 1px 0 0.8px" width="3" height="7" viewBox="0 0 3 7"><path d="M1.5 7 L1.5 2" stroke="#7a6a8a" stroke-width="0.8"/><path d="M0.5 2.8 L1.5 0.4 L2.5 2.8Z" fill="#3a3050"/></svg><span class="k">land site</span></div>
<div class="t" style="left:30.70px;top:320.36px;font-size:9.20px;line-height:9.20px;transform:scaleX(0.900);color:#111;"><span class="g">Part Holonyms</span>: <svg style="display:inline-block;vertical-align:baseline;margin:0 1px 0 0.8px" width="3" height="7" viewBox="0 0 3 7"><path d="M1.5 7 L1.5 2" stroke="#7a6a8a" stroke-width="0.8"/><path d="M0.5 2.8 L1.5 0.4 L2.5 2.8Z" fill="#3a3050"/></svg><span class="k">golf course</span>, <svg style="display:inline-block;vertical-align:baseline;margin:0 1px 0 0.8px" width="3" height="7" viewBox="0 0 3 7"><path d="M1.5 7 L1.5 2" stroke="#7a6a8a" stroke-width="0.8"/><path d="M0.5 2.8 L1.5 0.4 L2.5 2.8Z" fill="#3a3050"/></svg><span class="k">links course</span></div>
<div class="a" style="left:24.0px;top:290.7px;width:3px;height:1.6px;background:#222"></div>
<div class="dot" style="left:24.0px;top:73.4px;background:#2a10e0"></div>
<div class="dot" style="left:24.0px;top:84.3px;background:#1a6af8"></div>
<div class="dot" style="left:24.0px;top:95.2px;background:#8c8c8c"></div>
<div class="dot" style="left:24.0px;top:116.9px;background:#8c8c8c"></div>
<div class="dot" style="left:24.0px;top:182.1px;background:#8c8c8c"></div>
<div class="dot" style="left:24.0px;top:193.0px;background:#2a10e0"></div>
<div class="dot" style="left:24.0px;top:203.9px;background:#1a6af8"></div>
<div class="dot" style="left:24.0px;top:214.8px;background:#8c8c8c"></div>
<div class="dot" style="left:24.0px;top:236.5px;background:#8c8c8c"></div>
<div class="dot" style="left:24.0px;top:258.2px;background:#8c8c8c"></div>
<div class="dot" style="left:24.0px;top:269.1px;background:#8c8c8c"></div>
<div class="dot" style="left:24.0px;top:301.7px;background:#2a10e0"></div>
<div class="dot" style="left:24.0px;top:312.6px;background:#8c8c8c"></div>
<div class="dot" style="left:24.0px;top:323.5px;background:#8c8c8c"></div>
</div>
<div class="a" style="left:593px;top:412px;width:1.5px;height:1.5px;background:#b0b0b0"></div>
<div class="a" style="left:591px;top:414px;width:1.5px;height:1.5px;background:#b0b0b0"></div>
<div class="a" style="left:593px;top:414px;width:1.5px;height:1.5px;background:#b0b0b0"></div>
<div class="a" style="left:589px;top:416px;width:1.5px;height:1.5px;background:#b0b0b0"></div>
<div class="a" style="left:591px;top:416px;width:1.5px;height:1.5px;background:#b0b0b0"></div>
<div class="a" style="left:593px;top:416px;width:1.5px;height:1.5px;background:#b0b0b0"></div>
</body></html>
